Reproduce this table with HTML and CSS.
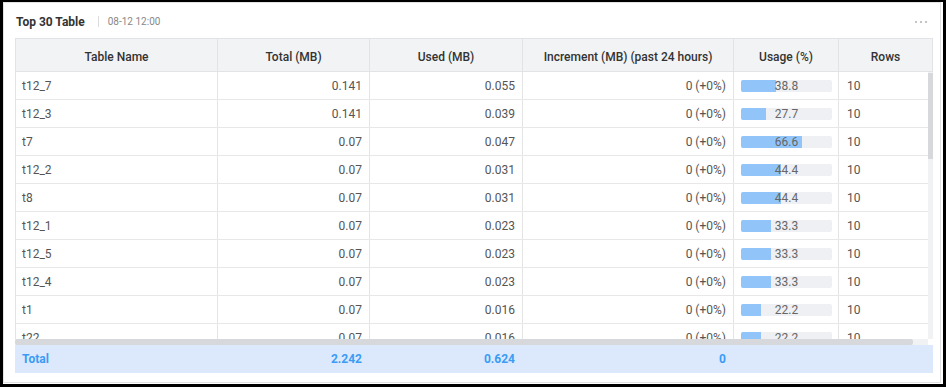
FILE: index.html
```html
<!DOCTYPE html>
<html>
<head>
<meta charset="utf-8">
<link rel="stylesheet" href="styles.css">
</head>
<body>
<div class="frame">
  <div class="card">
    <div class="card-head">
      <span class="title">Top 30 Table</span>
      <span class="sep"></span>
      <span class="time">08-12 12:00</span>
      <span class="more"><i class="dot"></i><i class="dot"></i><i class="dot"></i></span>
    </div>
    <div class="table">
      <div class="thead row-grid">
        <div class="th">Table Name</div>
        <div class="th">Total (MB)</div>
        <div class="th">Used (MB)</div>
        <div class="th">Increment (MB) (past 24 hours)</div>
        <div class="th">Usage (%)</div>
        <div class="th">Rows</div>
      </div>
      <div class="tbody">
        <div class="viewport" id="rows"></div>
        <div class="vtrack"><div class="vthumb"></div></div>
        <div class="htrack"><div class="hthumb"></div></div>
        <div class="corner"></div>
      </div>
      <div class="tfoot row-grid">
        <div class="tf left">Total</div>
        <div class="tf num">2.242</div>
        <div class="tf num">0.624</div>
        <div class="tf num">0</div>
        <div class="tf"></div>
        <div class="tf"></div>
      </div>
    </div>
  </div>
</div>
<script src="app.js"></script>
</body>
</html>
```

FILE: app.js
```js
var data = [
  ["t12_7", "0.141", "0.055", 38.8],
  ["t12_3", "0.141", "0.039", 27.7],
  ["t7", "0.07", "0.047", 66.6],
  ["t12_2", "0.07", "0.031", 44.4],
  ["t8", "0.07", "0.031", 44.4],
  ["t12_1", "0.07", "0.023", 33.3],
  ["t12_5", "0.07", "0.023", 33.3],
  ["t12_4", "0.07", "0.023", 33.3],
  ["t1", "0.07", "0.016", 22.2],
  ["t22", "0.07", "0.016", 22.2]
];
var body = document.getElementById("rows");
var html = "";
data.forEach(function (r) {
  html += '<div class="tr body-grid">' +
    '<div class="td left">' + r[0] + '</div>' +
    '<div class="td num">' + r[1] + '</div>' +
    '<div class="td num">' + r[2] + '</div>' +
    '<div class="td num">0 (+0%)</div>' +
    '<div class="td usage"><div class="bar"><div class="fill" style="width:' + r[3] + '%"></div><span class="pct">' + r[3].toFixed(1) + '</span></div></div>' +
    '<div class="td left rows">10</div>' +
    '</div>';
});
body.innerHTML = html;
```

FILE: styles.css
```css
* { box-sizing: border-box; }
html, body { margin: 0; padding: 0; background: #fff; }
body {
  width: 946px;
  height: 387px;
  font-family: Roboto, "Liberation Sans", Arial, sans-serif;
  font-size: 12px;
  color: #555;
  overflow: hidden;
}
.frame {
  width: 946px;
  height: 387px;
  border-style: solid;
  border-color: #000;
  border-width: 2px 3px 3px 3px;
  background: #fff;
}
.card {
  width: 938px;
  height: 381px;
  border: 1px solid #e3e3e3;
  background: #fff;
}
.card-head {
  height: 35px;
  display: flex;
  align-items: center;
  padding-left: 12px;
  padding-right: 13px;
  padding-top: 2px;
}
.title {
  font-size: 12px;
  font-weight: 700;
  color: #333;
}
.sep {
  width: 1px;
  height: 11px;
  background: #ddd;
  margin-left: 13px;
  margin-right: 9px;
}
.time {
  font-size: 10px;
  color: #888;
}
.more {
  margin-left: auto;
  display: flex;
  gap: 3px;
  align-items: center;
}
.dot {
  display: block;
  width: 2px;
  height: 2px;
  background: #c4c4c4;
}
.table {
  margin-left: 11px;
  width: 918px;
}
.row-grid {
  display: grid;
  grid-template-columns: 202px 152px 153px 211px 105px 94px;
}
.body-grid {
  display: grid;
  grid-template-columns: 202px 152px 153px 211px 105px 104px;
  width: 927px;
}
.thead {
  border: 1px solid #e1e3e6;
  border-right: none;
  background: #f2f3f5;
  height: 34px;
}
.th {
  border-right: 1px solid #e1e3e6;
  display: flex;
  align-items: center;
  justify-content: center;
  padding-top: 3px;
  font-weight: 500;
  color: #333;
  font-size: 12px;
}
.tbody {
  display: grid;
  grid-template-columns: 912px 5px;
  grid-template-rows: 267px 6px;
  border-left: 1px solid #e1e3e6;
}
.viewport {
  overflow: hidden;
}
.vtrack { background: #f1f2f4; }
.vthumb {
  margin-top: 1px;
  height: 86px;
  background: #d6d8db;
}
.htrack {
  background: #f1f2f4;
  margin-left: -1px;
}
.hthumb {
  width: 898px;
  height: 6px;
  background: #d6d8db;
  border-radius: 2px;
}
.corner { background: #fff; }
.tr {
  height: 28px;
  border-bottom: 1px solid #e8e8e8;
}
.td {
  border-right: 1px solid #e4e4e4;
  display: flex;
  align-items: center;
  padding: 0 8px;
  color: #555;
  white-space: nowrap;
}
.td.left { justify-content: flex-start; padding-left: 6px; }
.td.rows { padding-left: 8px; }
.td.num { justify-content: flex-end; padding-right: 7px; }
.td.usage { padding: 0 6px 0 7px; }
.bar {
  position: relative;
  width: 91px;
  height: 12px;
  background: #eef0f3;
  border-radius: 2px;
  overflow: hidden;
}
.fill {
  height: 100%;
  background: #91c5fa;
}
.pct {
  position: absolute;
  left: 0;
  right: 0;
  top: 0;
  line-height: 12px;
  text-align: center;
  color: #666;
  font-size: 12px;
}
.tfoot {
  height: 28px;
  background: #dce9fc;
}
.tf {
  display: flex;
  align-items: center;
  padding: 0 8px;
  color: #3a9cf5;
  font-weight: 700;
  font-size: 12px;
}
.tf.left { padding-left: 7px; }
.tf.num { justify-content: flex-end; padding-right: 7px; }
```
